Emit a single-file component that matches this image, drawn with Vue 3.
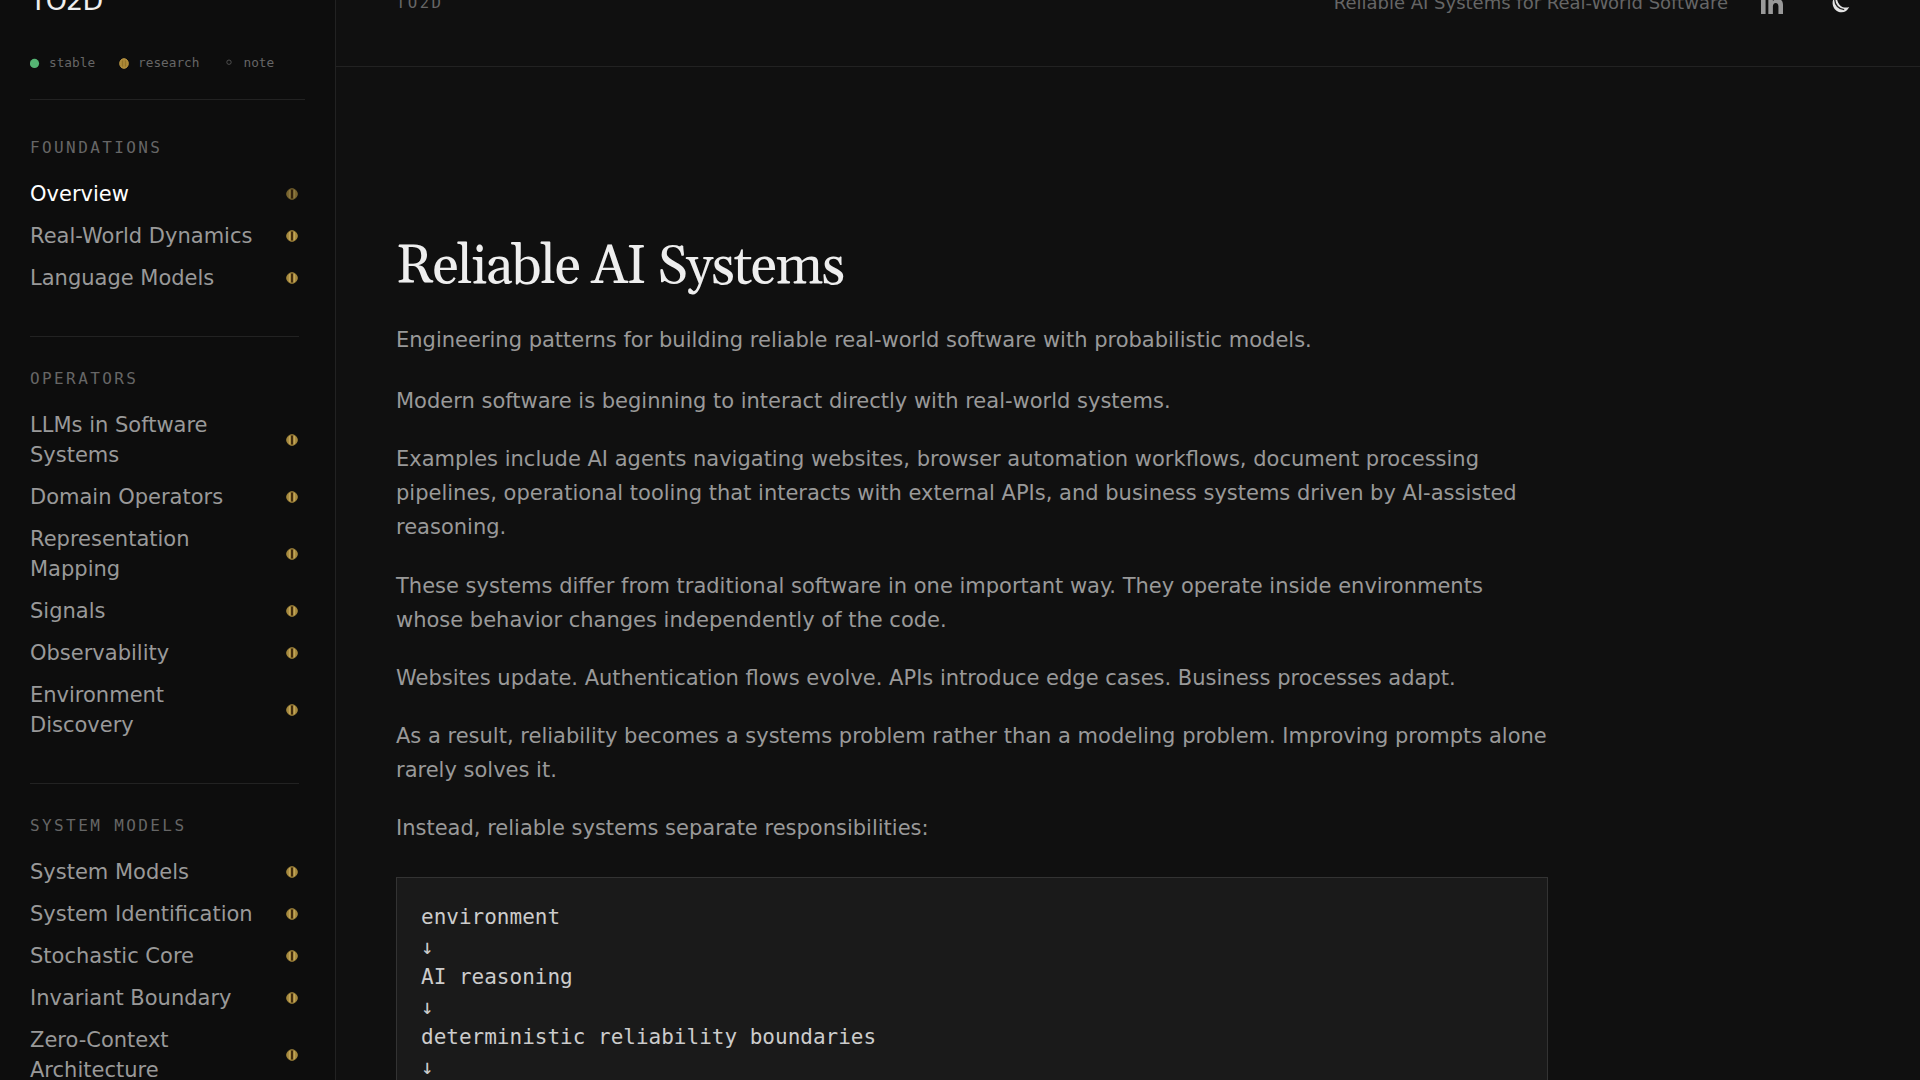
<template>
  <div class="layout">
    <aside class="sidebar">
      <div class="brand">TO2D</div>
      <div class="legend">
        <span class="legend__item">
          <svg class="legend__mark" viewBox="0 0 10 12">
            <circle cx="4.5" cy="6.4" r="4.6" fill="#55b473" />
          </svg>
          stable
        </span>
        <span class="legend__item legend__item--research">
          <svg class="legend__mark" viewBox="0 0 10 12">
            <ellipse cx="5" cy="6.5" rx="4.3" ry="4.8" fill="#a98635" stroke="#bf9a45" />
            <path d="M3.5 3.5v6M6.5 3.5v6" stroke="#8e7029" stroke-width="0.8" />
          </svg>
          research
        </span>
        <span class="legend__item">
          <svg class="legend__mark" viewBox="0 0 10 12">
            <circle cx="5" cy="5.2" r="2.2" fill="none" stroke="#555" stroke-width="0.9" />
          </svg>
          note
        </span>
      </div>
      <nav>
        <section v-for="group in groups" :key="group.title" class="group">
          <h2 class="group__title">{{ group.title }}</h2>
          <a
            v-for="item in group.items"
            :key="item"
            class="link"
            :class="{ 'link--active': item === current }"
          >
            <span class="link__label">{{ item }}</span>
            <svg class="link__mark" viewBox="0 0 14 14">
              <circle cx="7" cy="7" r="5.3" fill="#a98c40" stroke="#a1853a" />
              <path d="M4.500 3v8M9.500 3v8" stroke="#c4a75c" stroke-width="0.9" />
              <path d="M7 2.600v8.800" stroke="#3d270c" stroke-width="1.900" />
            </svg>
          </a>
        </section>
      </nav>
    </aside>

    <div class="page">
      <header class="topbar">
        <span class="topbar__name">TO2D</span>
        <div class="topbar__right">
          <span class="topbar__tagline">Reliable AI Systems for Real-World Software</span>
          <svg class="topbar__linkedin" viewBox="0 0 24 24" fill="currentColor">
            <path d="M4.98 3.5C4.98 4.88 3.87 6 2.5 6S.02 4.88.02 3.5 1.13 1 2.5 1s2.48 1.12 2.48 2.5zM5 8H0v16h5V8zm7.98 0H8.01v16h4.97v-8.4c0-4.67 6.03-5.05 6.03 0V24H24V13.87c0-7.88-8.92-7.59-11.02-3.71V8z" />
          </svg>
          <svg class="topbar__theme" viewBox="0 0 18 20">
            <path d="M5 1.6C1.8 4 .2 7.400 .7 11.200 1.400 16 5 19.300 9.600 19.300c3.300 0 6-1.900 7.600-5.300-3.700 1.300-7.400.4-9.700-2.300C5.200 8.900 4.400 5.200 5 1.600z" fill="#e4e4e4" />
            <path d="M2.800 7c.2 5 3.800 9.300 9.400 9.600" fill="none" stroke="#222" stroke-width="1.300" />
          </svg>
        </div>
      </header>

      <main class="content">
        <h1 class="title">Reliable AI Systems</h1>
        <p class="lead">Engineering patterns for building reliable real-world software with probabilistic models.</p>
        <p v-for="text in paragraphs" :key="text">{{ text }}</p>
        <pre class="flow">{{ flow.join('\n↓\n') }}</pre>
      </main>
    </div>
  </div>
</template>

<script setup>
const current = 'Overview'

const groups = [
  { title: 'Foundations', items: ['Overview', 'Real-World Dynamics', 'Language Models'] },
  {
    title: 'Operators',
    items: [
      'LLMs in Software Systems',
      'Domain Operators',
      'Representation Mapping',
      'Signals',
      'Observability',
      'Environment Discovery'
    ]
  },
  {
    title: 'System Models',
    items: [
      'System Models',
      'System Identification',
      'Stochastic Core',
      'Invariant Boundary',
      'Zero-Context Architecture'
    ]
  }
]

const paragraphs = [
  'Modern software is beginning to interact directly with real-world systems.',
  'Examples include AI agents navigating websites, browser automation workflows, document processing pipelines, operational tooling that interacts with external APIs, and business systems driven by AI-assisted reasoning.',
  'These systems differ from traditional software in one important way. They operate inside environments whose behavior changes independently of the code.',
  'Websites update. Authentication flows evolve. APIs introduce edge cases. Business processes adapt.',
  'As a result, reliability becomes a systems problem rather than a modeling problem. Improving prompts alone rarely solves it.',
  'Instead, reliable systems separate responsibilities:'
]

const flow = ['environment', 'AI reasoning', 'deterministic reliability boundaries', '']
</script>

<style>
body {
  background: #101010;
  overflow: hidden;
}
</style>

<style scoped>
.layout {
  display: flex;
  height: 1080px;
  overflow: hidden;
  background: #101010;
  color: #999;
  font-family: 'DejaVu Sans', sans-serif;
  font-size: 21px;
}

.sidebar {
  box-sizing: border-box;
  flex: none;
  width: 336px;
  padding: 0 30px;
  background: #0d0d0d;
  border-right: 1px solid #222;
}
.brand {
  height: 49px;
  margin-top: -17px;
  color: #eee;
  font-size: 27px;
  letter-spacing: -0.03em;
  line-height: 35px;
}
.legend {
  display: flex;
  gap: 24px;
  height: 68px;
  padding-top: 20px;
  box-sizing: border-box;
  border-bottom: 1px solid #222;
  color: #666;
  font-family: 'DejaVu Sans Mono', monospace;
  font-size: 12.75px;
  line-height: 22px;
}
.legend__item {
  display: flex;
  gap: 9px;
}
.legend__item--research {
  margin-right: 1px;
}
.legend__mark {
  width: 10px;
  height: 12px;
  margin-top: 5px;
}

.group {
  margin-right: 6px;
  padding: 33px 0 37px;
  border-bottom: 1px solid #222;
}
.group + .group {
  padding-top: 27px;
}
.group__title {
  margin: 0 0 10px;
  color: #666;
  font-family: 'DejaVu Sans Mono', monospace;
  font-size: 16px;
  font-weight: 400;
  letter-spacing: 0.15em;
  line-height: 30px;
  text-transform: uppercase;
}
.link {
  display: flex;
  align-items: center;
  justify-content: space-between;
  gap: 20px;
  padding: 6px 0;
  line-height: 30px;
}
.link__mark {
  flex: none;
  width: 14px;
  height: 14px;
}
.link--active {
  color: #fff;
}
.link--active .link__mark {
  opacity: 0.7;
}

.page {
  flex: 1;
  min-width: 0;
}
.topbar {
  box-sizing: border-box;
  display: flex;
  align-items: center;
  justify-content: space-between;
  height: 128px;
  margin-top: -61px;
  padding: 0 70px 0 60px;
  border-bottom: 1px solid #222;
  color: #666;
}
.topbar__name {
  font-family: 'DejaVu Sans Mono', monospace;
  font-size: 15.75px;
  letter-spacing: 0.15em;
}
.topbar__right {
  display: flex;
  align-items: center;
}
.topbar__tagline {
  font-size: 18px;
}
.topbar__linkedin {
  width: 22px;
  height: 22px;
  margin: 0 49px 0 33px;
  color: #999;
}
.topbar__theme {
  width: 18px;
  height: 20px;
}

.content {
  width: 1152px;
  padding: 165px 60px 0;
}
.title {
  margin: 0 0 21px;
  color: #eee;
  font-family: Gelasio, Georgia, serif;
  font-size: 54px;
  font-weight: 400;
  letter-spacing: -0.025em;
  line-height: 70px;
}
p {
  margin: 0 0 24.3px;
  line-height: 34px;
}
.lead {
  margin-bottom: 27px;
}
.flow {
  height: 260px;
  margin: 32px 0 0;
  padding: 24px;
  background: #1a1a1a;
  border: 1px solid #333;
  color: #ccc;
  box-sizing: border-box;
  font-family: 'DejaVu Sans Mono', monospace;
  font-size: 21px;
  line-height: 30px;
}
</style>
